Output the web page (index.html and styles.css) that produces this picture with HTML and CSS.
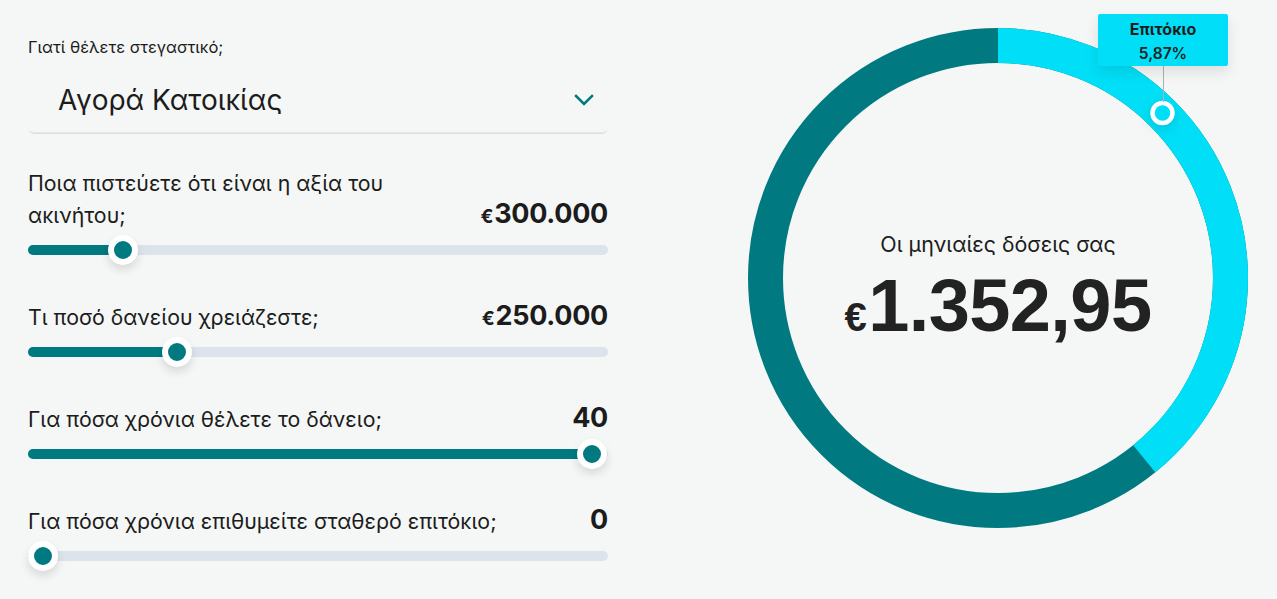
FILE: index.html
```html
<!DOCTYPE html>
<html lang="el">
<head>
<meta charset="utf-8">
<title>Στεγαστικό</title>
<link rel="stylesheet" href="styles.css">
</head>
<body>
<div class="page">
  <section class="form">
    <div class="field-label">Γιατί θέλετε στεγαστικό;</div>
    <div class="select">
      <span class="select-value">Αγορά Κατοικίας</span>
      <svg class="chevron" width="20" height="12" viewBox="0 0 20 12"><path d="M2 2 L10 10 L18 2" fill="none" stroke="#007a80" stroke-width="2.6" stroke-linecap="square"/></svg>
    </div>

    <div class="slider first">
      <div class="row">
        <div class="label wrap">Ποια πιστεύετε ότι είναι η αξία του ακινήτου;</div>
        <div class="value"><span class="cur">€</span>300.000</div>
      </div>
      <div class="track"><div class="fill" style="width:95px"><span class="thumb"></span></div></div>
    </div>

    <div class="slider">
      <div class="row">
        <div class="label">Τι ποσό δανείου χρειάζεστε;</div>
        <div class="value"><span class="cur">€</span>250.000</div>
      </div>
      <div class="track"><div class="fill" style="width:149px"><span class="thumb"></span></div></div>
    </div>

    <div class="slider">
      <div class="row">
        <div class="label">Για πόσα χρόνια θέλετε το δάνειο;</div>
        <div class="value">40</div>
      </div>
      <div class="track"><div class="fill" style="width:564px"><span class="thumb"></span></div></div>
    </div>

    <div class="slider">
      <div class="row">
        <div class="label">Για πόσα χρόνια επιθυμείτε σταθερό επιτόκιο;</div>
        <div class="value">0</div>
      </div>
      <div class="track"><div class="fill" style="width:15px"><span class="thumb"></span></div></div>
    </div>
  </section>

  <section class="chart">
    <div class="ring">
      <svg class="donut" width="500" height="500" viewBox="0 0 500 500">
        <circle cx="250" cy="250" r="232.5" fill="none" stroke="#007a80" stroke-width="35"/>
        <circle cx="250" cy="250" r="232.5" fill="none" stroke="#00dff7" stroke-width="35" stroke-dasharray="572 1000" transform="rotate(-90 250 250)"/>
        <circle class="marker" cx="414.5" cy="85" r="10" fill="#00dff7" stroke="#ffffff" stroke-width="4.5"/>
      </svg>
      <div class="center">
        <div class="center-label">Οι μηνιαίες δόσεις σας</div>
        <div class="amount"><span class="amount-cur">€</span>1.352,95</div>
      </div>
      <div class="tip-line"></div>
      <div class="tooltip">
        <div class="tip-title">Επιτόκιο</div>
        <div class="tip-value">5,87%</div>
      </div>
    </div>
  </section>
</div>
</body>
</html>
```

FILE: styles.css
```css
* { box-sizing: border-box; }
html, body { margin: 0; padding: 0; }
body {
  background: #f5f7f6;
  color: #1c1c1c;
  font-family: Inter, "Liberation Sans", Arial, sans-serif;
  width: 1277px;
  height: 599px;
  overflow: hidden;
}
.page {
  display: flex;
  padding: 38px 0 0 28px;
}
.form {
  width: 580px;
  display: flex;
  flex-direction: column;
}
.field-label {
  font-size: 16.5px;
  line-height: 18px;
}
.select {
  margin-top: 11px;
  height: 66px;
  display: flex;
  align-items: center;
  justify-content: space-between;
  padding: 0 14px 0 30px;
  border-radius: 0 0 6px 6px;
  box-shadow: 0 2px 1px -1px rgba(0, 0, 0, 0.10);
  border-bottom: 1px solid #e3e7e7;
}
.select-value {
  font-size: 28px;
}
.chevron { display: block; }

.slider { margin-top: 46px; }
.slider.first { margin-top: 34px; }
.row {
  display: flex;
  justify-content: space-between;
  align-items: last baseline;
}
.label {
  font-size: 21.3px;
  line-height: 32px;
}
.label.wrap { max-width: 385px; }
.value {
  font-size: 27px;
  font-weight: 700;
  line-height: 28px;
  letter-spacing: -0.3px;
}
.cur { font-size: 19px; margin-right: 1px; }
.track {
  margin-top: 14px;
  height: 10px;
  border-radius: 5px;
  background: #dde3ea;
}
.fill {
  height: 10px;
  border-radius: 5px;
  background: #007a80;
  position: relative;
}
.thumb {
  position: absolute;
  right: -15px;
  top: -10px;
  width: 30px;
  height: 30px;
  border-radius: 50%;
  background: #007a80;
  border: 6px solid #ffffff;
  box-shadow: 0 5px 10px rgba(0, 0, 0, 0.12);
}

.chart {
  margin-left: 140px;
}
.ring {
  width: 500px;
  height: 500px;
  margin-top: -10px;
  display: grid;
  position: relative;
}
.donut, .center { grid-area: 1 / 1; }
.donut { display: block; }
.marker { filter: drop-shadow(0 4px 6px rgba(0,0,0,0.12)); }
.center {
  display: flex;
  flex-direction: column;
  align-items: center;
  justify-content: center;
  padding-top: 32px;
}
.center-label {
  font-size: 21.4px;
  line-height: 26px;
}
.amount {
  margin-top: 9px;
  font-family: "Liberation Sans", Arial, sans-serif;
  font-weight: 700;
  font-size: 74px;
  line-height: 80px;
  letter-spacing: -0.6px;
  color: #222;
}
.amount-cur { font-size: 40px; margin-right: 2px; }
.tooltip {
  position: absolute;
  left: 350px;
  top: -14px;
  width: 130px;
  height: 52px;
  background: #00dff7;
  border-radius: 2px;
  box-shadow: 0 6px 14px rgba(0, 0, 0, 0.10);
  text-align: center;
  padding-top: 5px;
}
.tip-title {
  font-size: 16px;
  font-weight: 700;
  line-height: 20px;
}
.tip-value {
  font-size: 15.5px;
  font-weight: 600;
  line-height: 30px;
  color: #222;
}
.tip-line {
  position: absolute;
  left: 415px;
  top: 38px;
  width: 1px;
  height: 36px;
  background: #a9b3b5;
}
```
